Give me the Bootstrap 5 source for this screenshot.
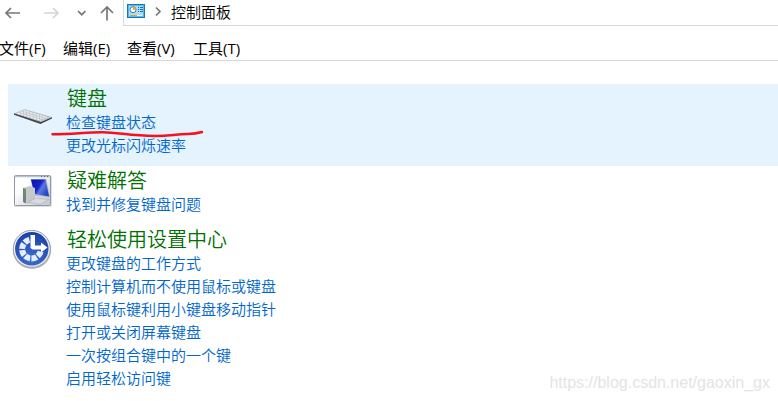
<!DOCTYPE html>
<html lang="zh-CN">
<head>
<meta charset="utf-8">
<meta name="viewport" content="width=device-width, initial-scale=1">
<title>控制面板</title>
<link href="https://cdn.jsdelivr.net/npm/bootstrap@5.3.0/dist/css/bootstrap.min.css" rel="stylesheet">
<style>
body{font-family:"Open Sans","Noto Sans CJK SC",sans-serif;font-size:15px;font-weight:350;color:#000;height:401px}
.nav-bar{height:26px}
.history{width:123px;flex:none}
.address{border-left:1px solid #d9d9d9;border-bottom:1px solid #d9d9d9;line-height:24px}
.menu-strip{height:35px;border-bottom:1px solid #d9d9d9;font-weight:400;line-height:20px;padding-top:12px;margin-left:-1px}
.menu-strip a{color:#000;width:64px;flex:none;white-space:nowrap}
.menu-strip a:nth-child(3){width:66px}
.results{margin:23px 0 0 8px}
.group-item{padding-bottom:10px}
.group-item.hot{background:#e5f3ff}
.group-icon{width:58px;flex:none}
.group-item h2{font-family:"Noto Sans CJK SC",sans-serif;font-size:20px;line-height:28px;font-weight:350;color:#007000;margin:0 0 -2px 1px}
.group-item a{display:block;font-family:"Noto Sans CJK SC",sans-serif;color:#0066cc;line-height:23px;width:max-content}
.pen{left:50px;top:128px}
.watermark{right:8px;bottom:8px;font:16px/20px "Liberation Sans",Arial,sans-serif;color:#e4e4e4}
svg{display:block}
</style>
</head>
<body class="bg-white overflow-hidden position-relative">
<header>
  <div class="nav-bar d-flex">
    <div class="history">
      <svg width="123" height="26" fill="none" stroke="#777" stroke-width="1.7">
        <path d="M20 13H6M11 8l-5 5 5 5"/>
        <path stroke="#d5d5d5" d="M44 13h14M53 8l5 5-5 5"/>
        <path d="M78 11l3.700 3.700L85.400 11"/>
        <path d="M107 20.500V7M101 13l6-6 6 6"/>
      </svg>
    </div>
    <div class="address d-flex flex-fill">
      <svg class="flex-shrink-0" width="47" height="25">
        <rect x="3.500" y="4.500" width="17" height="13" fill="#a9ddfa" stroke="#1679b5"/>
        <rect x="4.500" y="5.500" width="15" height="11" fill="none" stroke="#58b9ea"/>
        <circle cx="9" cy="9.700" r="3" fill="#fff" stroke="#2687c4"/>
        <path d="M9 9.700V6.500a3.200 3.200 0 0 1 3.200 3.200z" fill="#f49b22"/>
        <path d="M14 7.500h1m1 0h3M14 9.500h1m1 0h3M14 11.500h1m1 0h3" stroke="#1670b0"/>
        <path d="M6 15.500h7" stroke="#f49b22"/><path d="M13 15.500h5" stroke="#fff"/>
        <path d="M32 7.500l4 4-4 4" fill="none" stroke="#777" stroke-width="1.700"/>
      </svg>
      <span>控制面板</span>
    </div>
  </div>
  <nav class="menu-strip d-flex">
    <a class="text-decoration-none" href="#">文件(F)</a>
    <a class="text-decoration-none" href="#">编辑(E)</a>
    <a class="text-decoration-none" href="#">查看(V)</a>
    <a class="text-decoration-none" href="#">工具(T)</a>
  </nav>
</header>
<main class="results">
  <section class="group-item hot d-flex">
    <div class="group-icon">
      <svg width="58" height="60" viewBox="8 84 58 60">
        <path d="M14 113L41 121.500l11-4.500v1.600l-11.500 5.300L14 114.800z" fill="#3f474d"/>
        <path d="M14 113.200l10.500-4.200L52 117l-11 5z" fill="#bfc5ca"/>
        <path d="M17.500 113.100l23.500 7.100M20.500 111.800l23.500 7.100M23.500 110.500l23.500 7.100" stroke="#f3f5f7" stroke-width="1.100" stroke-dasharray="2.600 .8" fill="none"/>
      </svg>
    </div>
    <div>
      <h2>键盘</h2>
      <a class="text-decoration-none" href="#">检查键盘状态</a>
      <a class="text-decoration-none" href="#">更改光标闪烁速率</a>
    </div>
  </section>
  <section class="group-item d-flex">
    <div class="group-icon">
      <svg width="58" height="49" viewBox="8 166 58 49">
        <defs>
          <linearGradient id="scr" x1="0" y1="0" x2="1" y2=".6"><stop offset="0" stop-color="#0612a8"/><stop offset=".5" stop-color="#1825c8"/><stop offset=".65" stop-color="#5f76e4"/><stop offset="1" stop-color="#2448c4"/></linearGradient>
          <linearGradient id="win" x1="0" y1="0" x2="1" y2="1"><stop offset=".3" stop-color="#fff"/><stop offset="1" stop-color="#c3c6cd"/></linearGradient>
        </defs>
        <rect x="14" y="176" width="38" height="31" rx="1" fill="#dfe1e4"/>
        <rect x="14.500" y="175.500" width="36" height="30" rx="1" fill="url(#win)" stroke="#8f98a3"/>
        <path d="M15 176.500h35" stroke="#b5c3d2" stroke-width="1.500"/>
        <path d="M41 176.500h1m2 0h1m2 0h1" stroke="#596779"/>
        <path d="M30.500 179h16l3.500 18.500-16-1.500z" fill="#b9bfcb"/>
        <path d="M31 179.500h14.500l3.700 17-14.700-2.500z" fill="url(#scr)"/>
        <path d="M23 188l7-2 5 2v13l-7 3-5-2z" fill="#c5c9cc"/>
        <path d="M23 188l3 1v14.500l-3-1.500z" fill="#777d80"/>
        <path d="M24.500 189.500v5" stroke="#42b526" stroke-width="1.200"/>
        <path d="M28 202l8-4 13 1.500-9 5z" fill="#d8dbdf" stroke="#a3a8b1" stroke-width=".6"/>
      </svg>
    </div>
    <div>
      <h2>疑难解答</h2>
      <a class="text-decoration-none" href="#">找到并修复键盘问题</a>
    </div>
  </section>
  <section class="group-item d-flex">
    <div class="group-icon">
      <svg width="58" height="50" viewBox="8 225 58 50">
        <defs><radialGradient id="disc" cx=".5" cy=".8" r=".8"><stop offset="0" stop-color="#3b6fd6"/><stop offset="1" stop-color="#1c41a6"/></radialGradient></defs>
        <circle cx="32" cy="249.800" r="19.200" fill="#b9bcc1"/>
        <circle cx="31.800" cy="248.800" r="18.500" fill="#eceef0" stroke="#8b9098" stroke-width=".8"/>
        <circle cx="31.800" cy="248.800" r="16.700" fill="url(#disc)"/>
        <path d="M40.600 251.500A9.400 9.400 0 1 1 30 239.800" fill="none" stroke="#e6edfb" stroke-width="6" stroke-dasharray="5.500 1.300"/>
        <path d="M30.500 235h4.500V245.500h6v-3l6.500 5-6.500 5V249.500H32.500L30.500 248z" fill="#fff"/>
      </svg>
    </div>
    <div>
      <h2>轻松使用设置中心</h2>
      <a class="text-decoration-none" href="#">更改键盘的工作方式</a>
      <a class="text-decoration-none" href="#">控制计算机而不使用鼠标或键盘</a>
      <a class="text-decoration-none" href="#">使用鼠标键利用小键盘移动指针</a>
      <a class="text-decoration-none" href="#">打开或关闭屏幕键盘</a>
      <a class="text-decoration-none" href="#">一次按组合键中的一个键</a>
      <a class="text-decoration-none" href="#">启用轻松访问键</a>
    </div>
  </section>
</main>
<svg class="pen position-absolute" width="156" height="12" viewBox="50 128 156 12" fill="none" stroke="#f8101c" stroke-width="2.400" stroke-linecap="round" stroke-linejoin="round">
  <path d="M52.500 134.300C70 134.500 88 132 103 132.200S130 135.500 155 136c14 .2 20-1.800 33-2 7-.2 10-.8 14-2"/>
</svg>
<div class="watermark position-absolute">https://blog.csdn.net/gaoxin_gx</div>
<script src="https://cdn.jsdelivr.net/npm/bootstrap@5.3.0/dist/js/bootstrap.bundle.min.js"></script>
</body>
</html>
